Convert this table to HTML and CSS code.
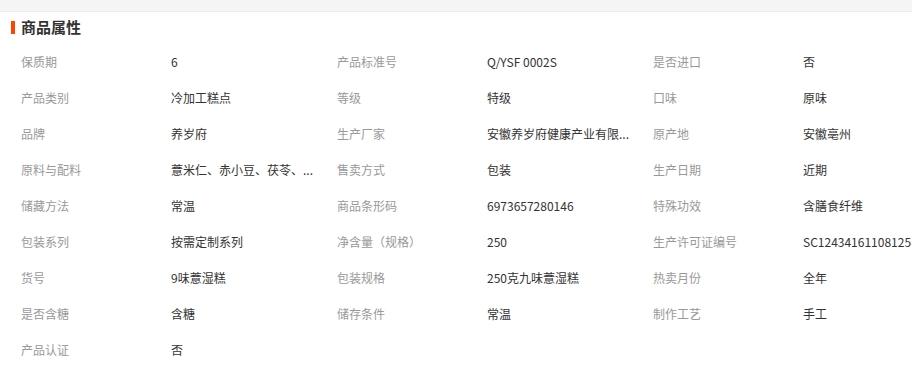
FILE: index.html
```html
<!DOCTYPE html>
<html lang="zh-CN">
<head>
<meta charset="utf-8">
<title>商品属性</title>
<link rel="stylesheet" href="styles.css">
</head>
<body>
<div class="topbar"></div>
<div class="header"><span class="mark"></span><h2 class="title">商品属性</h2></div>
<div class="attrs">
  <div class="lbl">保质期</div><div class="val">6</div>
  <div class="lbl">产品标准号</div><div class="val">Q/YSF 0002S</div>
  <div class="lbl">是否进口</div><div class="val">否</div>

  <div class="lbl">产品类别</div><div class="val">冷加工糕点</div>
  <div class="lbl">等级</div><div class="val">特级</div>
  <div class="lbl">口味</div><div class="val">原味</div>

  <div class="lbl">品牌</div><div class="val">养岁府</div>
  <div class="lbl">生产厂家</div><div class="val">安徽养岁府健康产业有限...</div>
  <div class="lbl">原产地</div><div class="val">安徽亳州</div>

  <div class="lbl">原料与配料</div><div class="val">薏米仁、赤小豆、茯苓、...</div>
  <div class="lbl">售卖方式</div><div class="val">包装</div>
  <div class="lbl">生产日期</div><div class="val">近期</div>

  <div class="lbl">储藏方法</div><div class="val">常温</div>
  <div class="lbl">商品条形码</div><div class="val">6973657280146</div>
  <div class="lbl">特殊功效</div><div class="val">含膳食纤维</div>

  <div class="lbl">包装系列</div><div class="val">按需定制系列</div>
  <div class="lbl">净含量（规格）</div><div class="val">250</div>
  <div class="lbl">生产许可证编号</div><div class="val">SC12434161108125</div>

  <div class="lbl">货号</div><div class="val">9味薏湿糕</div>
  <div class="lbl">包装规格</div><div class="val">250克九味薏湿糕</div>
  <div class="lbl">热卖月份</div><div class="val">全年</div>

  <div class="lbl">是否含糖</div><div class="val">含糖</div>
  <div class="lbl">储存条件</div><div class="val">常温</div>
  <div class="lbl">制作工艺</div><div class="val">手工</div>

  <div class="lbl">产品认证</div><div class="val">否</div>
</div>
</body>
</html>
```
FILE: styles.css
```css
html, body {
  margin: 0;
  padding: 0;
  background: #fff;
  font-family: "Microsoft YaHei", "Noto Sans CJK SC", "Noto Sans", sans-serif;
  font-size: 12px;
  color: #333;
}
.topbar {
  height: 11px;
  background: #f5f5f5;
  border-bottom: 1px solid #ededed;
}
.header {
  height: 31px;
  display: flex;
  align-items: center;
  padding-left: 11px;
}
.mark {
  width: 4px;
  height: 13px;
  background: #ff4400;
  margin-right: 6px;
}
.title {
  margin: 0 0 1px;
  font-size: 15px;
  font-weight: bold;
  color: #333;
  line-height: 20px;
}
.attrs {
  display: grid;
  grid-template-columns: 150px 166px 150px 166px 150px 1fr;
  grid-auto-rows: 36px;
  padding: 1px 0 0 21px;
}
.lbl, .val {
  line-height: 36px;
  white-space: nowrap;
}
.lbl {
  color: #999;
}
.val {
  color: #333;
}
```
